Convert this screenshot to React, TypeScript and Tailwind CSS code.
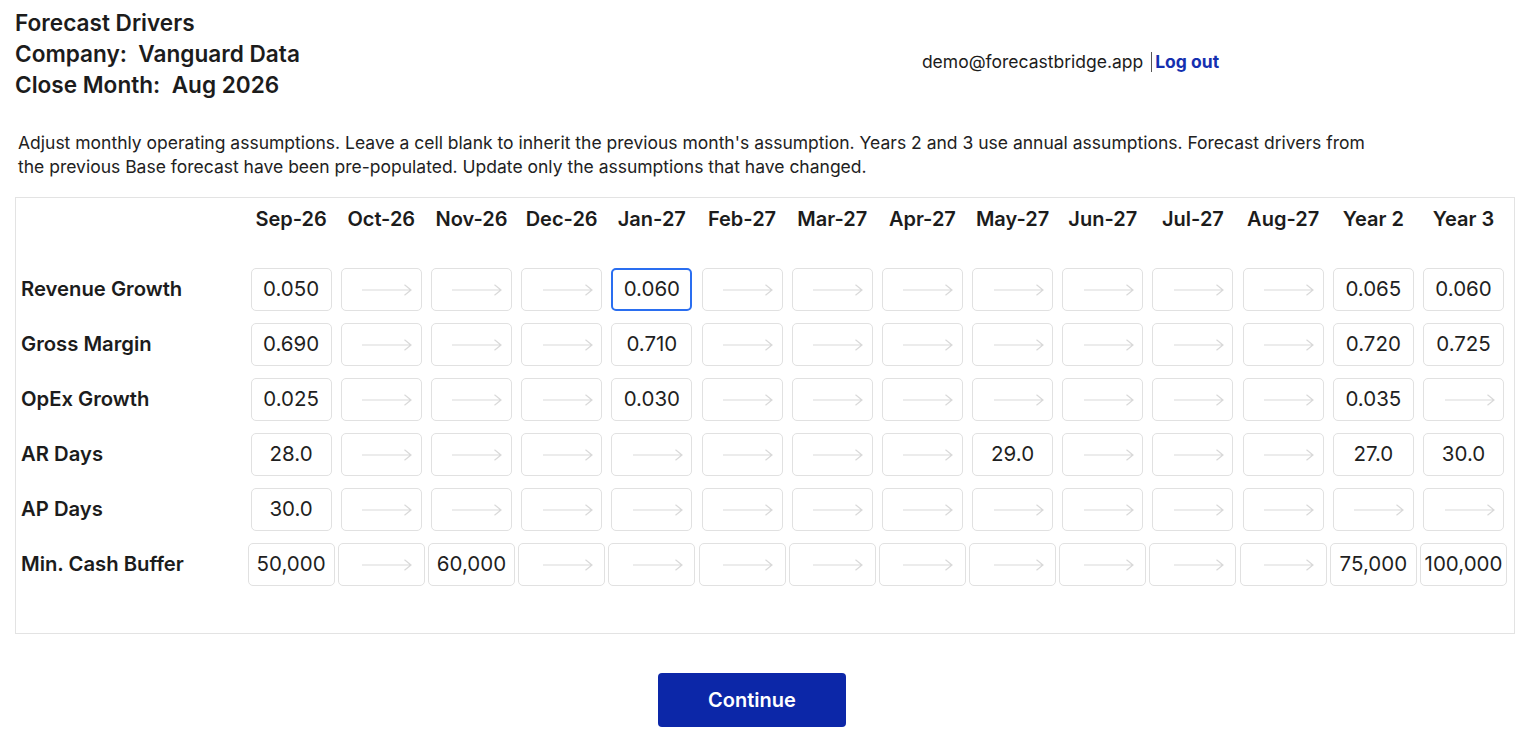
const COLUMNS = [
  'Sep-26',
  'Oct-26',
  'Nov-26',
  'Dec-26',
  'Jan-27',
  'Feb-27',
  'Mar-27',
  'Apr-27',
  'May-27',
  'Jun-27',
  'Jul-27',
  'Aug-27',
  'Year 2',
  'Year 3',
];

type Row = { label: string; values: Record<number, string>; wide?: boolean };

// blank cells inherit the previous month's assumption
const ROWS: Row[] = [
  { label: 'Revenue Growth', values: { 0: '0.050', 4: '0.060', 12: '0.065', 13: '0.060' } },
  { label: 'Gross Margin', values: { 0: '0.690', 4: '0.710', 12: '0.720', 13: '0.725' } },
  { label: 'OpEx Growth', values: { 0: '0.025', 4: '0.030', 12: '0.035' } },
  { label: 'AR Days', values: { 0: '28.0', 8: '29.0', 12: '27.0', 13: '30.0' } },
  { label: 'AP Days', values: { 0: '30.0' } },
  {
    label: 'Min. Cash Buffer',
    values: { 0: '50,000', 2: '60,000', 12: '75,000', 13: '100,000' },
    wide: true,
  },
];

function InheritArrow() {
  return (
    <svg width="50" height="12" viewBox="0 0 50 12" fill="none" aria-hidden="true">
      <path d="M0 6H49M42.5 0.8L49 6L42.5 11.2" stroke="#d9d9d9" strokeWidth="1.2" />
    </svg>
  );
}

function Cell({ value, wide, focused }: { value?: string; wide?: boolean; focused?: boolean }) {
  return (
    <div
      className={`flex h-[43px] items-center justify-center rounded-[5px] bg-white text-[20.5px] text-[#1f1f1f] ${
        wide ? 'w-[87px]' : 'w-[81px]'
      } ${focused ? 'border-2 border-[#2a6ef0]' : 'border-[1.5px] border-[#e1e1e1]'}`}
    >
      {value ?? (
        <span className="pl-[12px]">
          <InheritArrow />
        </span>
      )}
    </div>
  );
}

export default function App() {
  return (
    <div className="min-h-screen bg-white font-['Inter','Liberation_Sans',sans-serif] text-[#1c1c1c]">
      <header className="flex items-start px-[15px] pt-[7px]">
        <div className="text-[22.6px] font-semibold leading-[31px]">
          <div>Forecast Drivers</div>
          <div>Company:&nbsp; Vanguard Data</div>
          <div>Close Month:&nbsp; Aug 2026</div>
        </div>
        <div className="ml-[622px] mt-[43px] flex items-center text-[17.5px] leading-[24px]">
          <span>demo@forecastbridge.app</span>
          <a
            href="#"
            className="ml-[8px] border-l border-[#555] pl-[3px] font-bold leading-[20px] text-[#1530b0]"
          >
            Log out
          </a>
        </div>
      </header>

      <p className="ml-[18px] mt-[31px] w-[1350px] text-[17.5px] leading-[24px] text-[#222]">
        Adjust monthly operating assumptions. Leave a cell blank to inherit the previous month's
        assumption. Years 2 and 3 use annual assumptions. Forecast drivers from the previous Base
        forecast have been pre-populated. Update only the assumptions that have changed.
      </p>

      <section className="ml-[15px] mt-[18px] w-[1500px] border border-[#e3e3e3] pb-[47px] pt-[9px]">
        <div className="grid grid-cols-[230px_repeat(14,90.2px)] items-center">
          <div />
          {COLUMNS.map((c) => (
            <div key={c} className="text-center text-[20px] font-semibold leading-[24px]">
              {c}
            </div>
          ))}
        </div>

        <div className="mt-[37px] flex flex-col gap-[12px]">
          {ROWS.map((row) => (
            <div key={row.label} className="grid grid-cols-[230px_repeat(14,90.2px)] items-center">
              <div className="pl-[5px] text-[20.25px] font-semibold">{row.label}</div>
              {COLUMNS.map((c, i) => (
                <div key={c} className="flex justify-center">
                  <Cell
                    value={row.values[i]}
                    wide={row.wide}
                    focused={row.label === 'Revenue Growth' && i === 4}
                  />
                </div>
              ))}
            </div>
          ))}
        </div>
      </section>

      <div className="mt-[39px] pl-[658px]">
        <button
          type="button"
          className="h-[54px] w-[188px] rounded-[4px] bg-[#0c27a8] text-[20px] font-semibold text-white"
        >
          Continue
        </button>
      </div>
    </div>
  );
}
